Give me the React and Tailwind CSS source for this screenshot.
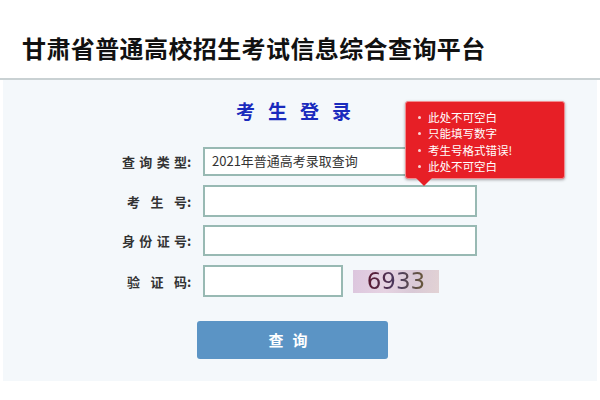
import React from "react";

const cjk = { fontFamily: '"Noto Sans CJK SC", "Noto Sans", sans-serif' };

const tips = ["此处不可空白", "只能填写数字", "考生号格式错误!", "此处不可空白"];

// label: characters spread over a fixed box, colon right after it
const Label = ({ chars }) => (
  <div className="flex w-[70px] items-center text-[13px] font-bold leading-none text-[#333]">
    <div className={`flex w-[65px] justify-between ${chars.length === 3 ? "pl-[5px]" : ""}`}>
      {chars.map((c, i) => (
        <span key={i}>{c}</span>
      ))}
    </div>
    <span>:</span>
  </div>
);

export default function App() {
  return (
    <div className="h-[400px] w-[600px] overflow-hidden bg-white" style={cjk}>
      {/* header */}
      <div className="h-[80px] border-b-2 border-[#c9d1d3] pl-[22px] pt-[34px]">
        <h1 className="text-[24px] font-bold leading-[28px] tracking-[0.4px] text-[#111]">
          甘肃省普通高校招生考试信息综合查询平台
        </h1>
      </div>

      {/* login panel */}
      <div className="relative mx-[3px] h-[301px] bg-[#f4f8fb] pt-[19px]">
        <div className="pl-[233px] text-[19px] font-bold leading-[24px] tracking-[13px] text-[#1a2bbd]">
          考生登录
        </div>

        <div className="mt-[23px] flex flex-col pl-[119px]">
          <div className="flex h-[30px] items-center gap-[11px]">
            <Label chars={["查", "询", "类", "型"]} />
            <div className="flex h-[29px] w-[274px] items-center border-2 border-[#98b9b3] bg-white pl-[7px] text-[13px] text-[#333]">
              2021年普通高考录取查询
            </div>
          </div>
          <div className="mt-[9px] flex h-[32px] items-center gap-[11px]">
            <Label chars={["考", "生", "号"]} />
            <div className="h-[32px] w-[274px] border-2 border-[#98b9b3] bg-white" />
          </div>
          <div className="mt-[8px] flex h-[31px] items-center gap-[11px]">
            <Label chars={["身", "份", "证", "号"]} />
            <div className="h-[31px] w-[274px] border-2 border-[#98b9b3] bg-white" />
          </div>
          <div className="mt-[9px] flex h-[32px] items-center gap-[11px]">
            <Label chars={["验", "证", "码"]} />
            <div className="h-[32px] w-[140px] border-2 border-[#98b9b3] bg-white" />
            <div
              className="ml-[-1px] flex h-[23px] w-[86px] items-center justify-center bg-[linear-gradient(100deg,#dcc6de_0%,#e6d3e2_40%,#d9c9d6_70%,#e2d2d4_100%)] text-[23px] leading-none"
              style={{ fontFamily: '"DejaVu Sans", sans-serif' }}
            >
              <span className="bg-[linear-gradient(90deg,#5a1830,#4a3a60,#6a5a3a)] bg-clip-text text-transparent">
                6933
              </span>
            </div>
          </div>
        </div>

        <div className="ml-[194px] mt-[24px] flex h-[38px] w-[191px] items-center justify-center rounded-[3px] bg-[#5b94c5] text-[15px] font-bold tracking-[9px] text-white">
          查询
        </div>

        {/* validation tooltip */}
        <div className="absolute left-[402px] top-[21px] h-[78px] w-[160px] rounded-[3px] border border-[#f28b8f] bg-[#e71f26] pl-[12px] pt-[7px] shadow-[0_1px_3px_rgba(0,0,0,0.35)]">
          {tips.map((t) => (
            <div key={t} className="flex h-[16.5px] items-center gap-[7px] text-[11.5px] leading-none text-white">
              <span className="h-[3px] w-[3px] rounded-full bg-white/80" />
              <span>{t}</span>
            </div>
          ))}
          <div className="absolute left-[10px] top-[76px] h-0 w-0 border-x-[8px] border-t-[8px] border-x-transparent border-t-[#e71f26]" />
        </div>
      </div>
    </div>
  );
}
